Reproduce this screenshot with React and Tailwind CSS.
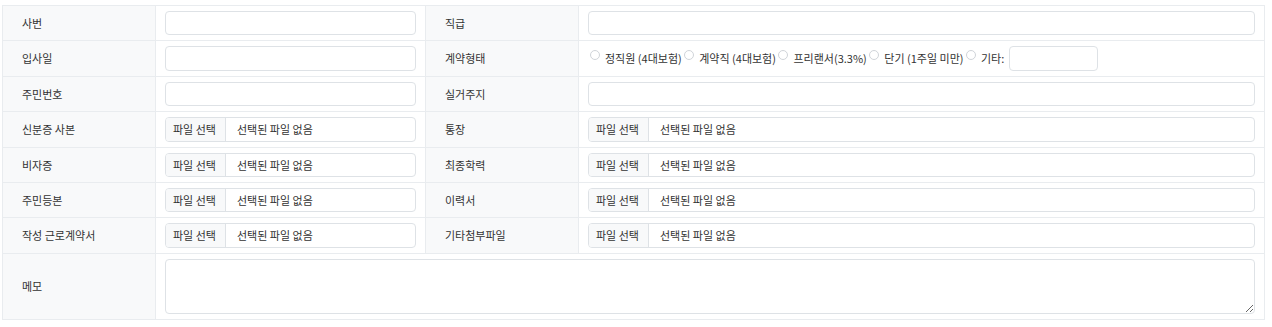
import React from 'react';

const font = "font-['Noto_Sans_CJK_KR','Noto_Sans',sans-serif]";

function Label({ children }) {
  return (
    <th className="bg-[#f8f9fa] border border-[#e9ecef] pl-[19px] pr-2 text-left font-normal text-[11px] text-[#333] align-middle">
      {children}
    </th>
  );
}

function Cell({ children }) {
  return <td className="border border-[#e9ecef] px-[9px] py-[5px] align-middle">{children}</td>;
}

function TextInput() {
  return <input type="text" className="block w-full h-[24.4px] border border-[#dee2e6] rounded-[4px] bg-white outline-none" />;
}

function FileInput() {
  return (
    <div className="flex items-stretch w-full h-[24.4px] border border-[#dee2e6] rounded-[4px] overflow-hidden text-[11px] text-[#333]">
      <span className="flex items-center px-[7px] w-[60px] shrink-0 bg-[#f8f9fa] border-r border-[#dee2e6]">파일 선택</span>
      <span className="flex items-center pl-[11px]">선택된 파일 없음</span>
    </div>
  );
}

function Radio({ label }) {
  return (
    <label className="flex items-center">
      <span className="w-[10px] h-[10px] rounded-full border border-[#d0d4d9] bg-white mb-[8px] mr-[5px] shrink-0" />
      <span className="mr-[2.5px]">{label}</span>
    </label>
  );
}

export default function App() {
  const fileRows = [
    ['신분증 사본', '통장'],
    ['비자증', '최종학력'],
    ['주민등본', '이력서'],
    ['작성 근로계약서', '기타첨부파일'],
  ];

  return (
    <div className={`${font} bg-white pl-[2px] pr-[7px] pt-[5px] pb-[7px]`}>
      <table className="w-full table-fixed border-collapse">
        <colgroup>
          <col className="w-[153px]" />
          <col className="w-[270px]" />
          <col className="w-[153px]" />
          <col />
        </colgroup>
        <tbody>
          <tr>
            <Label>사번</Label>
            <Cell><TextInput /></Cell>
            <Label>직급</Label>
            <Cell><TextInput /></Cell>
          </tr>
          <tr>
            <Label>입사일</Label>
            <Cell><TextInput /></Cell>
            <Label>계약형태</Label>
            <td className="border border-[#e9ecef] px-[9px] py-[5px] align-middle">
              <div className="flex items-center text-[11px] text-[#333] pl-[2px]">
                <Radio label="정직원 (4대보험)" />
                <Radio label="계약직 (4대보험)" />
                <Radio label="프리랜서(3.3%)" />
                <Radio label="단기 (1주일 미만)" />
                <Radio label="기타:" />
                <input type="text" className="ml-[2px] w-[89px] h-[24.4px] border border-[#dee2e6] rounded-[4px] bg-white outline-none" />
              </div>
            </td>
          </tr>
          <tr>
            <Label>주민번호</Label>
            <Cell><TextInput /></Cell>
            <Label>실거주지</Label>
            <Cell><TextInput /></Cell>
          </tr>
          {fileRows.map(([a, b]) => (
            <tr key={a}>
              <Label>{a}</Label>
              <Cell><FileInput /></Cell>
              <Label>{b}</Label>
              <Cell><FileInput /></Cell>
            </tr>
          ))}
          <tr>
            <Label>메모</Label>
            <td colSpan={3} className="border border-[#e9ecef] px-[9px] py-[5px] align-middle">
              <textarea className="block w-full h-[55px] border border-[#dee2e6] rounded-[4px] bg-white outline-none" />
            </td>
          </tr>
        </tbody>
      </table>
    </div>
  );
}
